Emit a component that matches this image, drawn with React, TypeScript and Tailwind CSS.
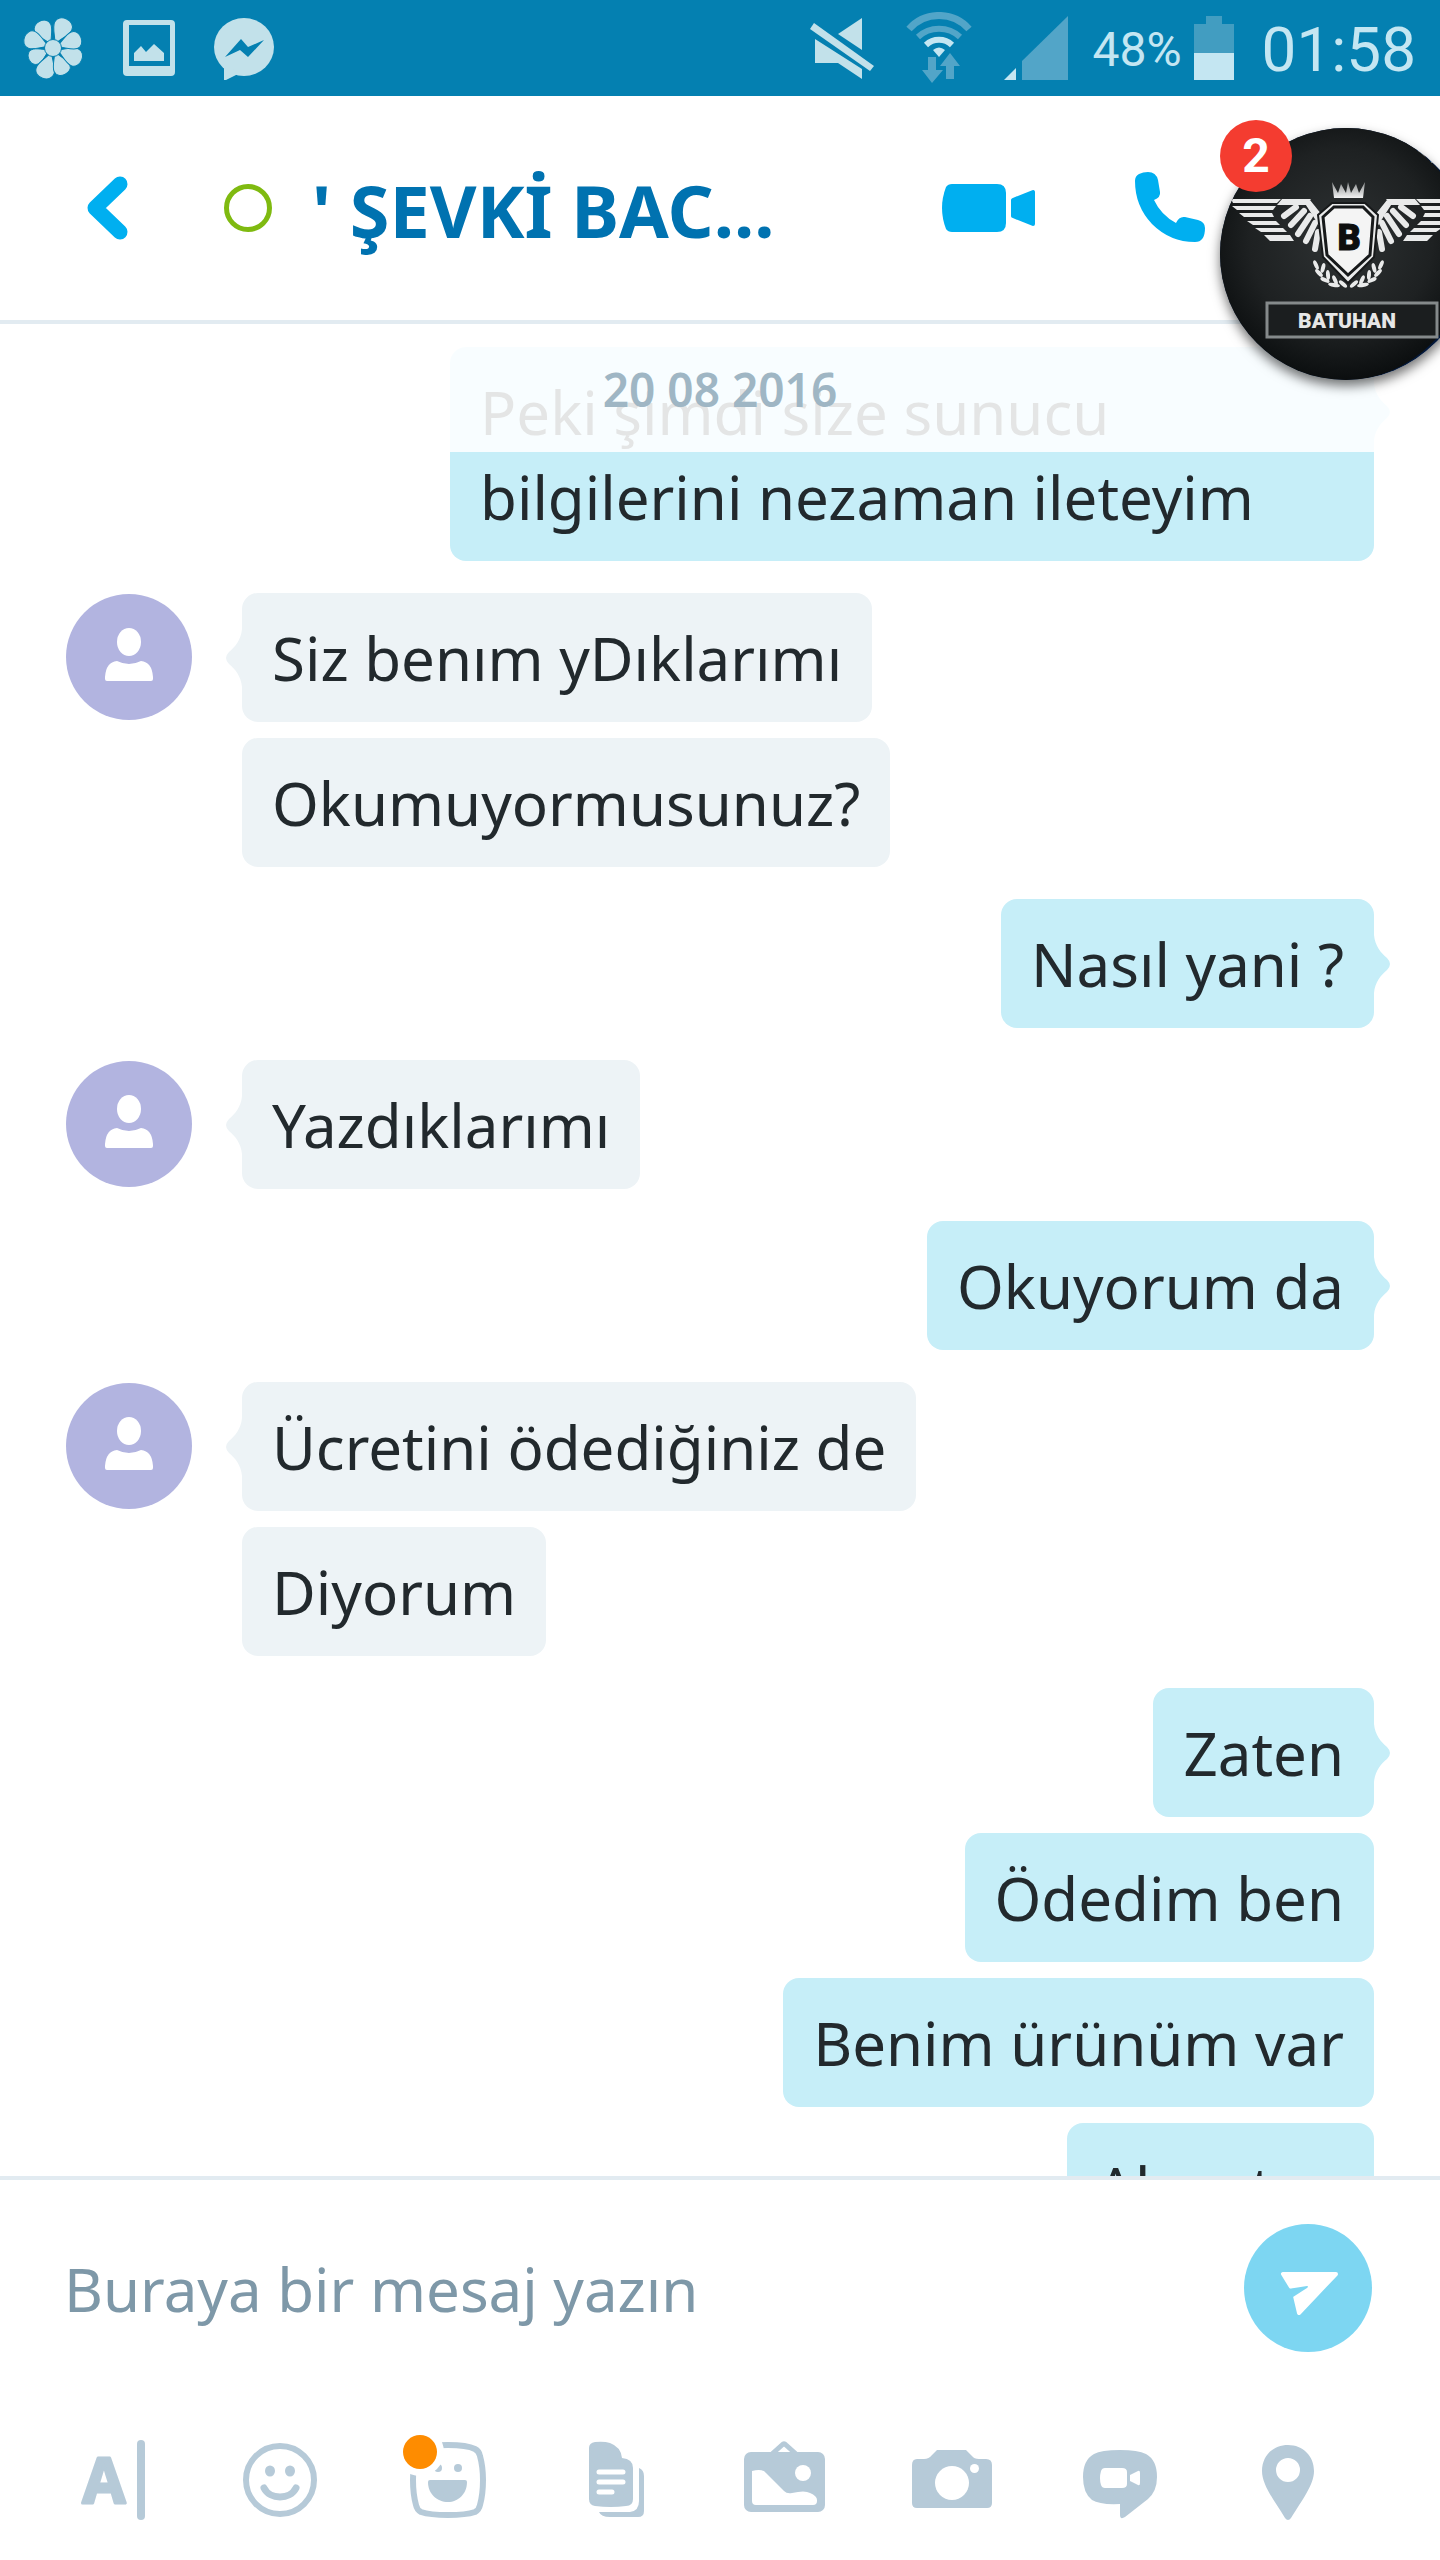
import { clsx } from "clsx";
import type { ReactNode } from "react";

type Group = { from: "me" | "other"; messages: string[] };

const groups: Group[] = [
  {
    from: "me",
    messages: ["Peki şimdi size sunucu bilgilerini nezaman ileteyim"],
  },
  { from: "other", messages: ["Siz benım yDıklarımı", "Okumuyormusunuz?"] },
  { from: "me", messages: ["Nasıl yani ?"] },
  { from: "other", messages: ["Yazdıklarımı"] },
  { from: "me", messages: ["Okuyorum da"] },
  { from: "other", messages: ["Ücretini ödediğiniz de", "Diyorum"] },
  {
    from: "me",
    messages: ["Zaten", "Ödedim ben", "Benim ürünüm var", "Almıştım"],
  },
];

// angle and scale of each petal
const petals = [
  [25, 1.05],
  [-27, 0.98],
  [-69, 1],
  [-116, 0.87],
  [-161, 1.05],
  [156, 0.95],
  [113, 1.02],
  [70, 0.98],
];

const StatusBar = () => {
  return (
    <div className="flex h-24 shrink-0 items-center bg-[#0480b1] px-6 pl-5 font-[Roboto,sans-serif] text-[#c4e6f2]">
      <div className="flex gap-8">
        <svg viewBox="0 0 64 64" className="size-16" fill="#c2e1ea">
          <g transform="translate(33 32)" stroke="#0480b1" strokeWidth="1">
            {petals.map(([angle, size]) => (
              <path
                key={angle}
                transform={`rotate(${angle}) scale(${size})`}
                d="M0 -4C-2 -10 -9 -17 -9 -23C-9 -33 9 -33 9 -23C9 -17 2 -10 0 -4Z"
              />
            ))}
            <circle r="8.5" />
          </g>
        </svg>
        <svg viewBox="0 0 64 64" className="size-16" fill="#c2e1ea">
          <path
            fillRule="evenodd"
            d="M11 4H55Q59 4 59 8V56Q59 60 55 60H11Q7 60 7 56V8Q7 4 11 4ZM13 9V50H54V9Z"
          />
          <path d="M18 45V37L25 30L30 36L38 28L48 37V45Z" />
        </svg>
        <svg viewBox="0 0 64 64" className="size-16" fill="#c2e1ea">
          <ellipse cx="32" cy="31" rx="30" ry="29" />
          <path d="M12 48V65L28 57Z" />
          <path fill="#0480b1" d="M13 41L29 23L36 31L52 24L36 41L28 34Z" />
        </svg>
      </div>

      <svg viewBox="0 0 64 64" className="ml-auto size-16" fill="#c2e1ea">
        <path d="M52 2V34L28 18Z" />
        <path d="M5 23V47H28L52 63V53Z" />
        <path d="M4 7L64 50L60 55L0 13Z" />
      </svg>
      <svg viewBox="0 -4 66 72" className="ml-8 h-[72px] w-[66px]" fill="none">
        <path d="M3 13A40 40 0 0 1 63 13" stroke="#52a5c8" strokeWidth="7" />
        <path d="M12 21A31 31 0 0 1 54 21" stroke="#52a5c8" strokeWidth="6" />
        <path d="M20 29A19 19 0 0 1 46 29" stroke="#c4e6f2" strokeWidth="6" />
        <path d="M27 34Q33 29 39 34L33 41Z" fill="#c4e6f2" />
        <path d="M22 41H30V54H37L26 67L16 54H22Z" fill="#52a5c8" />
        <path d="M44 37L54 50H48V63H40V50H34Z" fill="#52a5c8" />
      </svg>
      <svg viewBox="0 0 64 64" className="ml-8 size-16">
        <path d="M0 64L12 52V64Z" fill="#c4e6f2" />
        <path d="M18 64V45L64 0V64Z" fill="#52a5c8" />
      </svg>
      <span className="ml-6 pt-1 text-[48px] leading-none">48%</span>
      <svg viewBox="0 0 40 64" className="ml-3 h-16 w-10">
        <path d="M12 0H28V8H40V37H0V8H12Z" fill="#429dc1" />
        <path d="M0 37H40V64H0Z" fill="#c4e6f2" />
      </svg>
      <span className="ml-7 pt-1 text-[62px] leading-none">01:58</span>
    </div>
  );
};

const Wing = () => (
  <>
    <path d="M11 71H61L57 75H13ZM12 78H56L53 82H17ZM19 85H52L54 89H24ZM27 93H56L60 97H33ZM35 100H63L67 104H41ZM44 107H70L74 113H50Z" />
    <path d="M62 71H91L86 77H57Z" />
    <g stroke="currentColor" strokeWidth="6" strokeLinecap="round">
      <path d="M76 79L64 88" />
      <path d="M84 83L71 97" />
      <path d="M90 88L78 106" />
      <path d="M95 95L86 113" />
      <path d="M98 104L95 121" />
    </g>
    <path d="M84 74L90 72L106 92L106 110L100 99Z" />
    <g>
      <ellipse cx="96" cy="137" rx="2" ry="5" transform="rotate(-25 96 137)" />
      <ellipse cx="103" cy="140" rx="2" ry="5" transform="rotate(15 103 140)" />
      <ellipse cx="99" cy="145" rx="2" ry="5" transform="rotate(-45 99 145)" />
      <ellipse cx="108" cy="147" rx="2" ry="5" transform="rotate(-5 108 147)" />
      <ellipse cx="105" cy="152" rx="2" ry="5" transform="rotate(-65 105 152)" />
      <ellipse cx="115" cy="152" rx="2" ry="5" transform="rotate(-25 115 152)" />
      <ellipse cx="114" cy="157" rx="2" ry="6" transform="rotate(-80 114 157)" />
      <ellipse cx="123" cy="156" rx="2" ry="5" transform="rotate(-50 123 156)" />
    </g>
  </>
);

const ChatHead = () => {
  return (
    <button
      aria-label="BATUHAN"
      className="absolute -right-8 top-8 z-20 size-[252px] rounded-full shadow-[0_6px_12px_rgba(0,0,0,0.55)]"
    >
      <svg viewBox="0 0 252 252" className="size-full">
        <defs>
          <clipPath id="head">
            <circle cx="126" cy="126" r="126" />
          </clipPath>
          <radialGradient id="leather" cx="0.5" cy="0.45" r="0.55">
            <stop offset="0" stopColor="#2e3233" />
            <stop offset="0.65" stopColor="#1e2122" />
            <stop offset="1" stopColor="#0b0e0f" />
          </radialGradient>
          <linearGradient id="silver" x1="0" x2="0" y1="0" y2="1">
            <stop offset="0" stopColor="#8c8f90" />
            <stop offset="1" stopColor="#f2f2f2" />
          </linearGradient>
        </defs>
        <g clipPath="url(#head)">
          <rect width="252" height="252" fill="#03183a" />
          <text
            x="193"
            y="35"
            className="fill-[#d5dbe4] font-['Liberation_Sans',sans-serif] text-[20px] font-bold"
          >
            ATU
          </text>
          <circle cx="121" cy="125" r="128" fill="url(#leather)" />
          <g fill="#e9eaea" color="#e9eaea">
            <Wing />
            <g transform="translate(257 0) scale(-1 1)">
              <Wing />
            </g>
          </g>
          <path
            d="M112 54L118 65L121 56L126 65L128 54L131 65L136 56L139 65L145 54L143 70H114Z"
            fill="url(#silver)"
          />
          <path
            d="M112 75H145L158 87L154 129L128 155L103 129L98 87Z"
            fill="#e9eaea"
            stroke="#17191a"
            strokeWidth="2"
          />
          <path
            d="M114 79H143L153 89L150 127L128 147L107 127L103 89Z"
            fill="#f4f4f4"
            stroke="#17191a"
            strokeWidth="3"
          />
          <text
            x="129"
            y="122"
            textAnchor="middle"
            className="fill-[#0d0e0e] stroke-[#0d0e0e] font-[Roboto,sans-serif] text-[36px] font-black"
          >
            B
          </text>
          <rect x="47" y="175" width="170" height="34" fill="#1b1e1f" stroke="#858a8b" strokeWidth="3" />
          <text
            x="127"
            y="200"
            textAnchor="middle"
            className="fill-[#e6e6e6] font-[Roboto,sans-serif] text-[21px] font-black"
          >
            BATUHAN
          </text>
        </g>
      </svg>
      <span className="absolute -top-2 left-0 flex size-[72px] items-center justify-center rounded-full bg-[#f43c30] font-[Roboto,sans-serif] text-[48px] font-bold leading-none text-white">
        2
      </span>
    </button>
  );
};

const Header = () => {
  return (
    <header className="relative flex h-[228px] shrink-0 items-center border-b-4 border-[#e2ebf1] pl-[84px] pr-[234px]">
      <button aria-label="Geri">
        <svg viewBox="0 0 48 80" className="h-20 w-12" fill="none">
          <path
            d="M36 16L11 40L36 64"
            stroke="#00aff0"
            strokeWidth="15"
            strokeLinecap="round"
            strokeLinejoin="round"
          />
        </svg>
      </button>
      <span className="ml-[92px] size-12 shrink-0 rounded-full border-[5px] border-[#7fba10]" />
      <h1 className="ml-10 flex-1 whitespace-nowrap pt-1 text-[72px] font-bold leading-none text-[#0072b0]">
        ' ŞEVKİ BAC...
      </h1>
      <div className="flex gap-[98px]">
        <button aria-label="Görüntülü arama">
          <svg viewBox="0 0 96 72" className="h-[72px] w-24" fill="#00aff0">
            <path d="M12 12H57Q66 12 66 21V51Q66 60 57 60H12Q8 60 6 57Q-2 36 6 15Q8 12 12 12Z" />
            <path
              d="M73 28L93 20V52L73 44Z"
              stroke="#00aff0"
              strokeWidth="4"
              strokeLinejoin="round"
            />
          </svg>
        </button>
        <button aria-label="Sesli arama">
          <svg viewBox="0 0 72 72" className="size-[72px]" fill="#00aff0">
            <path d="M1 9Q1 4 5 2Q9 0 14 0Q22 0 24 8L26 20Q27 25 20 28Q27 43 42 51Q45 44 51 45L64 48Q71 50 71 56Q71 70 61 70Q36 70 18 52Q1 34 1 9Z" />
          </svg>
        </button>
      </div>
      <ChatHead />
    </header>
  );
};

const Avatar = () => (
  <svg viewBox="0 0 126 126" className="mt-px size-[126px] shrink-0">
    <circle cx="63" cy="63" r="63" fill="#b2b4e0" />
    <ellipse cx="63" cy="48" rx="12" ry="14" fill="#fff" />
    <path
      d="M39 83Q40 68 51 67Q63 73 75 67Q86 68 87 83V85Q87 87 85 87H41Q39 87 39 85Z"
      fill="#fff"
    />
  </svg>
);

const Bubble = ({ text, mine, tail }: { text: string; mine: boolean; tail: boolean }) => {
  return (
    <div
      className={clsx(
        "relative w-fit max-w-[924px] rounded-2xl px-[30px] pb-[21px] pt-[23px] text-[60px] leading-[85px] text-[#22292d]",
        mine ? "bg-[#c6eef8]" : "bg-[#edf3f6]"
      )}
    >
      {tail && (
        <svg
          viewBox="0 0 17 58"
          className={clsx(
            "absolute top-9 h-[58px] w-[17px]",
            mine ? "-right-4 fill-[#c6eef8]" : "-left-4 -scale-x-100 fill-[#edf3f6]"
          )}
        >
          <path d="M0 0H1C2 11 8 18 14 23Q20 29 14 35C8 40 2 47 1 58H0Z" />
        </svg>
      )}
      {text}
    </div>
  );
};

const Conversation = () => {
  return (
    <main className="relative min-h-0 flex-1 overflow-hidden">
      <div className="absolute inset-x-0 top-0 z-10 flex h-32 items-center justify-center bg-white/88 pt-0.5 text-[46px] font-semibold text-[#9fb6c4]">
        20 08 2016
      </div>
      <div className="flex flex-col gap-8 px-[66px] pt-[23px]">
        {groups.map(({ from, messages }, i) => {
          const mine = from === "me";
          return (
            <div key={i} className={clsx("flex", mine ? "justify-end" : "gap-[50px]")}>
              {!mine && <Avatar />}
              <div className={clsx("flex flex-col gap-4", mine && "items-end")}>
                {messages.map((text, j) => (
                  <Bubble key={text} text={text} mine={mine} tail={j === 0} />
                ))}
              </div>
            </div>
          );
        })}
      </div>
    </main>
  );
};

const Tool = ({ label, children }: { label: string; children: ReactNode }) => (
  <button aria-label={label} className="flex flex-1 justify-center">
    <svg viewBox="0 0 96 96" className="size-24" fill="#b6cad8">
      {children}
    </svg>
  </button>
);

const Composer = () => {
  return (
    <footer className="shrink-0 border-t-4 border-[#e2ebf1]">
      <div className="flex items-center gap-8 py-11 pl-16 pr-[68px]">
        <input
          type="text"
          aria-label="Buraya bir mesaj yazın"
          placeholder="Buraya bir mesaj yazın"
          className="min-w-0 flex-1 pt-0.5 text-[60px] leading-[85px] text-[#22292d] outline-none placeholder:text-[#7e98a8]"
        />
        <button aria-label="Gönder" className="size-32 shrink-0 rounded-full bg-[#7dd6f2]">
          <svg viewBox="0 0 128 128" className="size-full">
            <path
              d="M39 50H92L55 89L51 72L65 61L47 63Z"
              fill="#fff"
              stroke="#fff"
              strokeWidth="4"
              strokeLinejoin="round"
            />
            <path d="M44 65L63 62Q65 62 63 64L49 73Z" fill="#7dd6f2" />
          </svg>
        </button>
      </div>
      <div className="flex pb-8 pl-7 pr-[68px] pt-9">
        <Tool label="Metin">
          <text
            x="40"
            y="71"
            textAnchor="middle"
            strokeWidth="3"
            strokeLinejoin="round"
            className="stroke-[#b6cad8] font-['Open_Sans',sans-serif] text-[62px] font-bold"
          >
            A
          </text>
          <rect x="73" y="8" width="8" height="80" rx="4" />
        </Tool>
        <Tool label="İfadeler">
          <circle cx="48" cy="48" r="34" fill="none" stroke="#b6cad8" strokeWidth="6" />
          <ellipse cx="38" cy="39" rx="5" ry="5.5" />
          <ellipse cx="58" cy="39" rx="5" ry="5.5" />
          <path
            d="M32 56C38 68 58 68 64 56"
            fill="none"
            stroke="#b6cad8"
            strokeWidth="7"
            strokeLinecap="round"
          />
        </Tool>
        <Tool label="Mojiler">
          <path
            d="M48 13Q67 13 75 17Q79 19 80 24Q83 35 83 48Q83 62 80 73Q79 78 75 80Q66 83 48 83Q30 83 21 80Q17 78 16 73Q13 62 13 48Q13 35 16 24Q17 19 21 17Q29 13 48 13Z"
            fill="none"
            stroke="#b6cad8"
            strokeWidth="6"
          />
          <circle cx="38" cy="36" r="4" />
          <circle cx="58" cy="36" r="4" />
          <path d="M30 48H65Q67 48 67 50C67 62 58 70 48 70C37 70 28 62 28 50Q28 48 30 48Z" />
          <circle cx="20" cy="20" r="24" fill="#fff" />
          <circle cx="20" cy="20" r="17" fill="#fe8c00" />
        </Tool>
        <Tool label="Dosya">
          <path d="M27 10Q36 9 42 11Q53 15 54 26Q65 27 65 36V67Q65 74 58 74Q43 76 27 74Q21 73 21 67V16Q21 11 27 10Z" />
          <path d="M71 36Q76 38 76 44V79Q76 85 70 85H42Q33 85 31 80H62Q71 79 71 69Z" />
          <path
            d="M31 40H55M31 50H55M31 60H44"
            stroke="#fff"
            strokeWidth="5"
            strokeLinecap="round"
          />
        </Tool>
        <Tool label="Resim">
          <path
            d="M36 22L46 13Q48 11 50 13L60 22"
            fill="none"
            stroke="#b6cad8"
            strokeWidth="5"
          />
          <rect x="8" y="20" width="81" height="60" rx="7" />
          <path
            d="M16 39Q26 36 30 41L48 59Q51 62 56 61Q69 58 74 61Q81 64 81 68V69Q81 73 77 73H20Q16 73 16 69Z"
            fill="#fff"
          />
          <circle cx="67" cy="41" r="8" fill="#fff" />
        </Tool>
        <Tool label="Kamera">
          <path d="M13 27H20Q25 27 28 23L33 18H62L68 24Q70 27 75 27H82Q88 27 88 33V71Q88 76 83 76H13Q8 76 8 71V33Q8 27 13 27Z" />
          <circle cx="48" cy="51" r="17" fill="#fff" />
          <circle cx="70.5" cy="36.5" r="4.5" fill="#fff" />
        </Tool>
        <Tool label="Video mesaj">
          <path d="M48 18Q66 18 74 22Q85 28 85 45Q85 59 76 67L53 85Q48 88 48 83V72Q28 73 20 68Q11 61 11 45Q11 28 22 22Q29 18 48 18Z" />
          <path
            d="M33 36H50Q55 36 55 40V52Q55 56 50 56H33Q30 56 29 53Q27 46 29 39Q30 36 33 36ZM58 43L66 39Q68 38 68 41V51Q68 54 66 53L58 49Z"
            fill="#fff"
          />
        </Tool>
        <Tool label="Konum">
          <path
            fillRule="evenodd"
            d="M48 13C63 13 74 24 74 39C74 53 62 68 51 86Q48 90 45 86C34 68 22 53 22 39C22 24 33 13 48 13ZM48 26A12 12 0 1 0 48 50A12 12 0 1 0 48 26Z"
          />
        </Tool>
      </div>
    </footer>
  );
};

export default function App() {
  return (
    <div className="flex h-screen flex-col overflow-hidden bg-white font-['Noto_Sans','Open_Sans',sans-serif]">
      <StatusBar />
      <Header />
      <Conversation />
      <Composer />
    </div>
  );
}
